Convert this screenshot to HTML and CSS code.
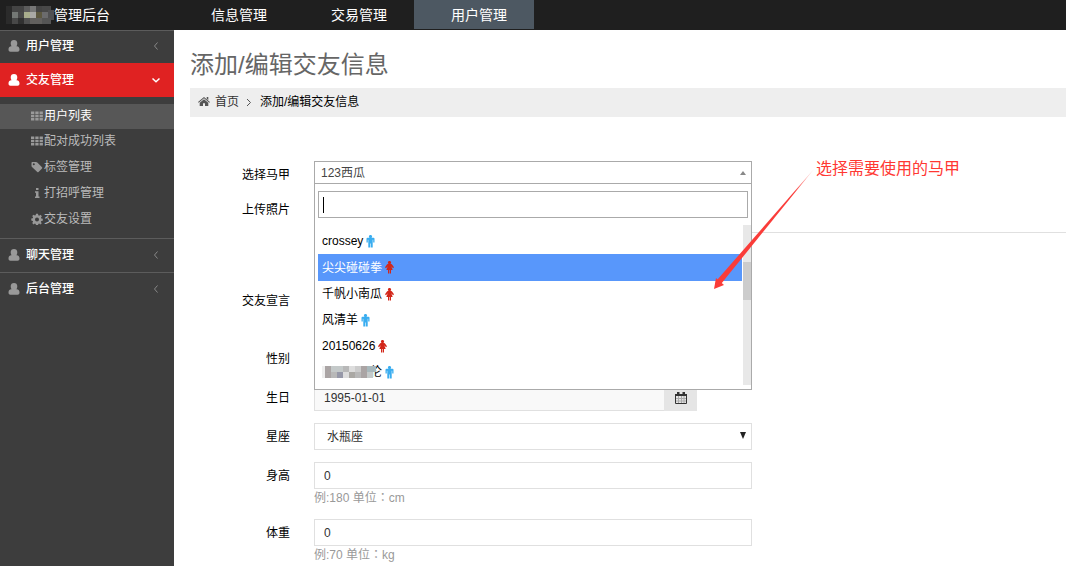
FILE: index.html
```html
<!DOCTYPE html>
<html lang="zh-CN">
<head>
<meta charset="utf-8">
<title>添加/编辑交友信息</title>
<link rel="stylesheet" href="styles.css">
</head>
<body>
<svg width="0" height="0" class="defs" aria-hidden="true">
  <symbol id="user" viewBox="0 0 12 12"><path d="M6 0c2.100 0 3.300 1.200 3.300 3.300 0 1.200-.3 2.200-.9 3C10.700 6.200 11.500 7.500 11.500 9.800c0 1.200-.8 1.900-1.900 1.900H2.400C1.300 11.700.5 11 .5 9.800.5 7.500 1.300 6.200 3.600 6.300 3 5.500 2.700 4.500 2.700 3.300 2.700 1.200 3.900 0 6 0z"/></symbol>
  <symbol id="grid" viewBox="0 0 12 11"><path d="M0 1h3.300v2.500H0zM4.300 1h3.300v2.500H4.300zM8.600 1h3.300v2.500H8.600zM0 4.300h3.300v2.500H0zM4.300 4.300h3.300v2.500H4.300zM8.600 4.300h3.300v2.500H8.600zM0 7.600h3.300v2.500H0zM4.300 7.600h3.300v2.500H4.300zM8.600 7.600h3.300v2.500H8.600z"/></symbol>
  <symbol id="tag" viewBox="0 0 12 12"><path fill-rule="evenodd" d="M.5 1.800Q.5 1 1.300 1H5q.7 0 1.300.5L11 6.200q.6.600 0 1.200L7.500 10.900q-.6.600-1.200 0L1 6Q.5 5.500.5 5zM2.800 2.300a1 1 0 1 0 0 2 1 1 0 0 0 0-2z"/></symbol>
  <symbol id="info" viewBox="0 0 12 12"><path d="M5 1h2.500v2H5zM4 4.300h3.500V9.500h1V11H4V9.500h1V5.800H4z"/></symbol>
  <symbol id="gear" viewBox="0 0 12 12"><path fill-rule="evenodd" d="M5 .8h2l.3 1.500.9.400 1.300-.9 1.400 1.400-.9 1.300.3.900 1.500.3v2l-1.500.3-.4.900.9 1.300-1.400 1.300-1.200-.9-.9.400-.3 1.300H5l-.3-1.400-.9-.4-1.300.9-1.300-1.300.9-1.300-.4-.9L.3 7.500v-2l1.400-.3.400-.9-.9-1.200 1.400-1.400 1.200.9.900-.4zM6 4.500a2 2 0 1 0 0 4 2 2 0 0 0 0-4z"/></symbol>
  <symbol id="left" viewBox="0 0 6 10"><path d="M4.500 1.500 1.500 5l3 3.500" fill="none" stroke="currentColor"/></symbol>
  <symbol id="down" viewBox="0 0 10 8"><path d="M1.500 2.500 5 5.800 8.500 2.500" fill="none" stroke="currentColor" stroke-width="1.500"/></symbol>
  <symbol id="home" viewBox="0 0 12 11"><path d="M6 1 12 6l-.7.700L6 2.300.7 6.700 0 6l4.500-3.800zM8.700 1h1.600v3L8.700 2.700zM6 3.300l4.300 3.500V10H7V7.300H5V10H1.700V6.800z"/></symbol>
  <symbol id="man" viewBox="0 0 9 13"><path d="M4.500 0a1.500 1.500 0 0 1 1 2.700H7.500q1 0 1 1V7.500H7.200V4.800h-.5V12.500H4.800V8.500H4.200V12.500H2.300V4.800H1.800V7.500H.5V3.700q0-1 1-1H3.500A1.500 1.500 0 0 1 4.500 0z"/></symbol>
  <symbol id="woman" viewBox="0 0 9 13"><path d="M4.500 0a1.500 1.500 0 0 1 1 2.700Q6.500 2.700 7 3.500L9 6.300 8 7.200 6.300 5.300 7.700 9H6v3.500H4.800V9H4.200v3.500H3V9H1.300L2.700 5.300 1 7.200 0 6.300 2 3.500Q2.500 2.700 3.500 2.700A1.500 1.500 0 0 1 4.500 0z"/></symbol>
</svg>

<header class="topbar">
  <div class="brand">
    <svg class="brand-mosaic" viewBox="0 0 48 18" shape-rendering="crispEdges" aria-hidden="true">
      <path fill="#2b2b2b" d="M0 0h6v18H0z"/><path fill="#444" d="M6 0h12v6H6zM30 0h6v6h-6z"/>
      <path fill="#747875" d="M6 6h6v6H6z"/><path fill="#484848" d="M12 6h6v6h-6zM6 12h6v6H6zM36 0h9v6h-9z"/><path fill="#303030" d="M12 12h6v6h-6z"/>
      <path fill="#5c5c5c" d="M18 0h6v6h-6z"/><path fill="#777" d="M24 0h6v6h-6z"/>
      <path fill="#a8ad8c" d="M18 6h6v6h-6z"/><path fill="#aaa9a6" d="M24 6h6v6h-6z"/><path fill="#5d5840" d="M30 6h6v6h-6z"/><path fill="#6b6b6d" d="M36 6h6v6h-6z"/><path fill="#505052" d="M42 4h6v10h-6z"/>
      <path fill="#505050" d="M18 12h6v6h-6z"/><path fill="#62605e" d="M24 12h12v6H24z"/><path fill="#555" d="M36 12h9v6h-9z"/>
    </svg>
    <span>管理后台</span>
  </div>
  <nav class="topnav">
    <a href="#">信息管理</a>
    <a href="#">交易管理</a>
    <a href="#" class="active">用户管理</a>
  </nav>
</header>

<div class="page">
  <nav class="sidebar">
    <a href="#" class="menu"><svg class="icon"><use href="#user"/></svg><span>用户管理</span><svg class="arrow"><use href="#left"/></svg></a>
    <a href="#" class="menu open"><svg class="icon"><use href="#user"/></svg><span>交友管理</span><svg class="arrow"><use href="#down"/></svg></a>
    <div class="submenu">
      <a href="#" class="current"><svg class="icon"><use href="#grid"/></svg>用户列表</a>
      <a href="#"><svg class="icon"><use href="#grid"/></svg>配对成功列表</a>
      <a href="#"><svg class="icon"><use href="#tag"/></svg>标签管理</a>
      <a href="#"><svg class="icon"><use href="#info"/></svg>打招呼管理</a>
      <a href="#"><svg class="icon"><use href="#gear"/></svg>交友设置</a>
    </div>
    <a href="#" class="menu"><svg class="icon"><use href="#user"/></svg><span>聊天管理</span><svg class="arrow"><use href="#left"/></svg></a>
    <a href="#" class="menu"><svg class="icon"><use href="#user"/></svg><span>后台管理</span><svg class="arrow"><use href="#left"/></svg></a>
  </nav>

  <main class="content">
    <h1>添加/编辑交友信息</h1>
    <nav class="breadcrumb">
      <svg class="home"><use href="#home"/></svg>
      <a href="#">首页</a>
      <svg class="sep" viewBox="0 0 6 10"><path d="M1 2 4.500 5.500 1 9" fill="none" stroke="#555"/></svg>
      <span>添加/编辑交友信息</span>
    </nav>

    <form class="form">
      <div class="row vest">
        <label for="vest-search">选择马甲</label>
        <div class="picker">
          <button type="button" class="picked">123西瓜<svg viewBox="0 0 6 4"><path d="M3 0 6 4H0z"/></svg></button>
          <div class="dropdown">
            <input id="vest-search" class="search" type="text">
            <div class="results">
              <ul>
                <li>crossey<svg class="man"><use href="#man"/></svg></li>
                <li class="selected">尖尖碰碰拳<svg class="woman"><use href="#woman"/></svg></li>
                <li>千帆小南瓜<svg class="woman"><use href="#woman"/></svg></li>
                <li>风清羊<svg class="man"><use href="#man"/></svg></li>
                <li>20150626<svg class="woman"><use href="#woman"/></svg></li>
                <li><svg class="name-mosaic" viewBox="0 0 54 12" shape-rendering="crispEdges" aria-hidden="true"><path fill="#eee" d="M0 0h4v12H0z"/><path fill="#aaa4a4" d="M3 0h6v12H3zM39 0h6v12h-6z"/><path fill="#c4c9c9" d="M9 0h12v6H9zM45 6h6v6h-6z"/><path fill="#b8b8b8" d="M21 0h6v6h-6zM9 6h6v6H9zM33 6h6v6h-6z"/><path fill="#9698a8" d="M15 6h6v6h-6z"/><path fill="#ddd" d="M27 0h6v6h-6zM21 6h6v6h-6z"/><path fill="#aaa8a4" d="M27 6h6v6h-6z"/><path fill="#ccc" d="M33 0h6v6h-6z"/><path fill="#a8b8bc" d="M45 0h9v6h-9z"/></svg>伦<svg class="man"><use href="#man"/></svg></li>
              </ul>
              <div class="track"><div class="thumb"></div></div>
            </div>
          </div>
          <svg class="pointer" viewBox="0 0 102 122" aria-hidden="true">
            <defs><linearGradient id="fade" x1="1" y1="0" x2="0" y2="1"><stop offset="0" stop-color="#fa3c39" stop-opacity=".2"/><stop offset=".2" stop-color="#fa3c39"/></linearGradient></defs>
            <path fill="url(#fade)" d="M100 1 7 116 3 112z"/><path fill="#fa3c39" d="M0 121 2 110l8 7z"/>
          </svg>
          <div class="note">选择需要使用的马甲</div>
        </div>
      </div>
      <div class="row photo"><span class="label">上传照片</span><div class="photos"></div></div>
      <div class="row motto"><label for="motto">交友宣言</label><textarea id="motto"></textarea></div>
      <div class="row gender"><span class="label">性别</span></div>
      <div class="row"><label for="birth">生日</label>
        <div class="date"><input id="birth" class="field" type="text" value="1995-01-01" readonly><button type="button" aria-label="选择日期"><svg viewBox="0 0 12 12"><path fill="none" stroke="#333" d="M.5 2.500h11v9H.5z"/><path fill="#333" d="M0 2h12v2H0zM2 0h2.500v3H2zM7.500 0H10v3H7.500z"/><path fill="none" stroke="#aaa" d="M3.500 4v7M6.500 4v7M9 4v7M1 6.500h10M1 9h10"/></svg></button></div>
      </div>
      <div class="row"><label for="sign">星座</label>
        <div class="select"><select id="sign" class="field"><option>水瓶座</option></select><svg viewBox="0 0 6 7"><path d="M0 0h6L3 7z"/></svg></div>
      </div>
      <div class="row"><label for="height">身高</label>
        <div><input id="height" class="field" type="text" value="0"><p class="help">例:180 单位<span lang="zh-TW">：</span>cm</p></div>
      </div>
      <div class="row"><label for="weight">体重</label>
        <div><input id="weight" class="field" type="text" value="0"><p class="help">例:70 单位<span lang="zh-TW">：</span>kg</p></div>
      </div>
    </form>
  </main>
</div>
</body>
</html>
```
FILE: styles.css
```css
* { box-sizing: border-box; }
body {
  margin: 0;
  min-height: 100vh;
  display: flex;
  flex-direction: column;
  overflow: hidden;
  color: #000;
  background: #fff;
  font: 12px/18px "Liberation Sans", "Noto Sans CJK SC", sans-serif;
}
input, button, select, textarea { font: inherit; color: inherit; border-radius: 0; margin: 0; }
a { color: inherit; text-decoration: none; }
.defs { position: absolute; }

.topbar { display: flex; height: 30px; background: #1f1f1f; color: #fff; font-size: 14px; line-height: 30px; }
.brand { width: 174px; padding-left: 6px; display: flex; align-items: center; }
.brand-mosaic { width: 48px; height: 18px; }
.topnav { display: flex; }
.topnav a { width: 120px; height: 29px; padding-left: 37px; }
.topnav .active { background: #4d5862; }

.page { flex: 1; display: flex; }
.sidebar { width: 174px; flex: none; background: #3d3d3d; color: #fff; }
.menu { display: flex; align-items: center; height: 34px; padding: 0 13px 2px 8px; border-top: 1px solid #5c5c5c; font-weight: 500; }
.menu:first-child { height: 33px; }
.menu span { flex: 1; padding-left: 6px; }
.icon { width: 12px; height: 12px; fill: #999; }
.arrow { width: 10px; height: 10px; color: #888; }
.menu.open { background: #e02222; border-color: #e02222; }
.open .icon { fill: #fff; }
.open .arrow { color: #fff; }
.submenu { padding: 7px 0 5px; color: #bbb; }
.submenu a { display: flex; align-items: center; height: 26px; padding: 0 0 2px 31px; gap: 1px; }
.submenu a.current { height: 25px; background: #575757; color: #fff; padding-bottom: 1px; }

.content { flex: 1; padding: 16px 0 0 16px; min-width: 0; }
h1 { margin: 0 0 4px; font-size: 24px; line-height: 38px; font-weight: 400; color: #666; }
.breadcrumb { display: flex; align-items: center; height: 29px; padding: 0 8px 2px; background: #eee; }
.breadcrumb a { color: #333; margin-left: 5px; }
.home { width: 12px; height: 11px; fill: #555; }
.sep { width: 6px; height: 10px; margin: 0 8px 0 7px; }

.form { padding-top: 44px; }
.row { display: grid; grid-template-columns: 100px 50%; column-gap: 24px; margin-bottom: 12px; }
.row > label, .label { height: 27px; text-align: right; line-height: 29px; }
.field { display: block; width: 100%; height: 27px; padding: 0 9px; border: 1px solid #e0e0e0; background: #fff; color: #333; outline: 0; }
.help { margin: 0; line-height: 18px; color: #999; }
.help span { font-family: "Noto Sans CJK TC", sans-serif; line-height: 1; }

.picker { position: relative; }
.picked { display: flex; align-items: center; justify-content: space-between; width: 100%; height: 23px; padding: 0 5px 0 6px; border: 1px solid #aaa; background: #fff; color: #444; text-align: left; }
.picked svg { width: 6px; height: 4px; fill: #888; }
.dropdown { position: absolute; z-index: 1; top: 22px; left: 0; width: 100%; border: 1px solid #aaa; background: #fff; padding: 7px 0 4px 3px; }
.search { display: block; width: calc(100% - 3px); height: 27px; border: 1px solid #aaa; padding: 4px; outline: 0; background: linear-gradient(#000, #000) 4px 5px / 1px 16px no-repeat #fff; }
.results { display: flex; gap: 1px; height: 160px; margin-top: 7px; overflow: hidden; }
.results ul { flex: 1; margin: 0; padding: 3px 0 0; list-style: none; }
.results li { display: flex; align-items: center; height: 26px; padding-left: 4px; gap: 3px; }
.results .selected { height: 27px; background: #5897fb; color: #fff; }
.man, .woman { width: 9px; height: 13px; fill: #39adf0; }
.woman { fill: #d22619; }
.name-mosaic { width: 54px; height: 12px; margin-right: -9px; z-index: 1; }
.track { width: 8px; background: #e8e8e8; padding-top: 37px; }
.thumb { height: 38px; background: #ccc; }
.pointer { position: absolute; z-index: 2; top: 7px; right: -64px; width: 102px; height: 122px; }
.note { position: absolute; left: 100%; top: -5px; margin-left: 64px; white-space: nowrap; font-size: 16px; line-height: 26px; color: #ff3833; }

.vest { margin-bottom: 8px; }
.photo { grid-template-columns: 100px 1fr; margin-bottom: 17px; }
.photos { height: 37px; border-bottom: 1px solid #e0e0e0; }
.motto { margin-bottom: 5px; }
.motto label { padding-top: 37px; }
.motto textarea { height: 90px; border: 1px solid #e0e0e0; resize: none; }
.date { display: flex; width: calc(100% - 55px); }
.date .field { border-right: 0; background: #f9f9f9; }
.date button { width: 33px; flex: none; border: 0; padding: 0; background: #e5e5e5; }
.date button svg { display: block; width: 12px; height: 12px; margin: auto; }
.select { position: relative; }
.select .field { appearance: none; padding-left: 12px; }
.select svg { position: absolute; right: 6px; top: 9px; width: 6px; height: 7px; fill: #222; }
```
